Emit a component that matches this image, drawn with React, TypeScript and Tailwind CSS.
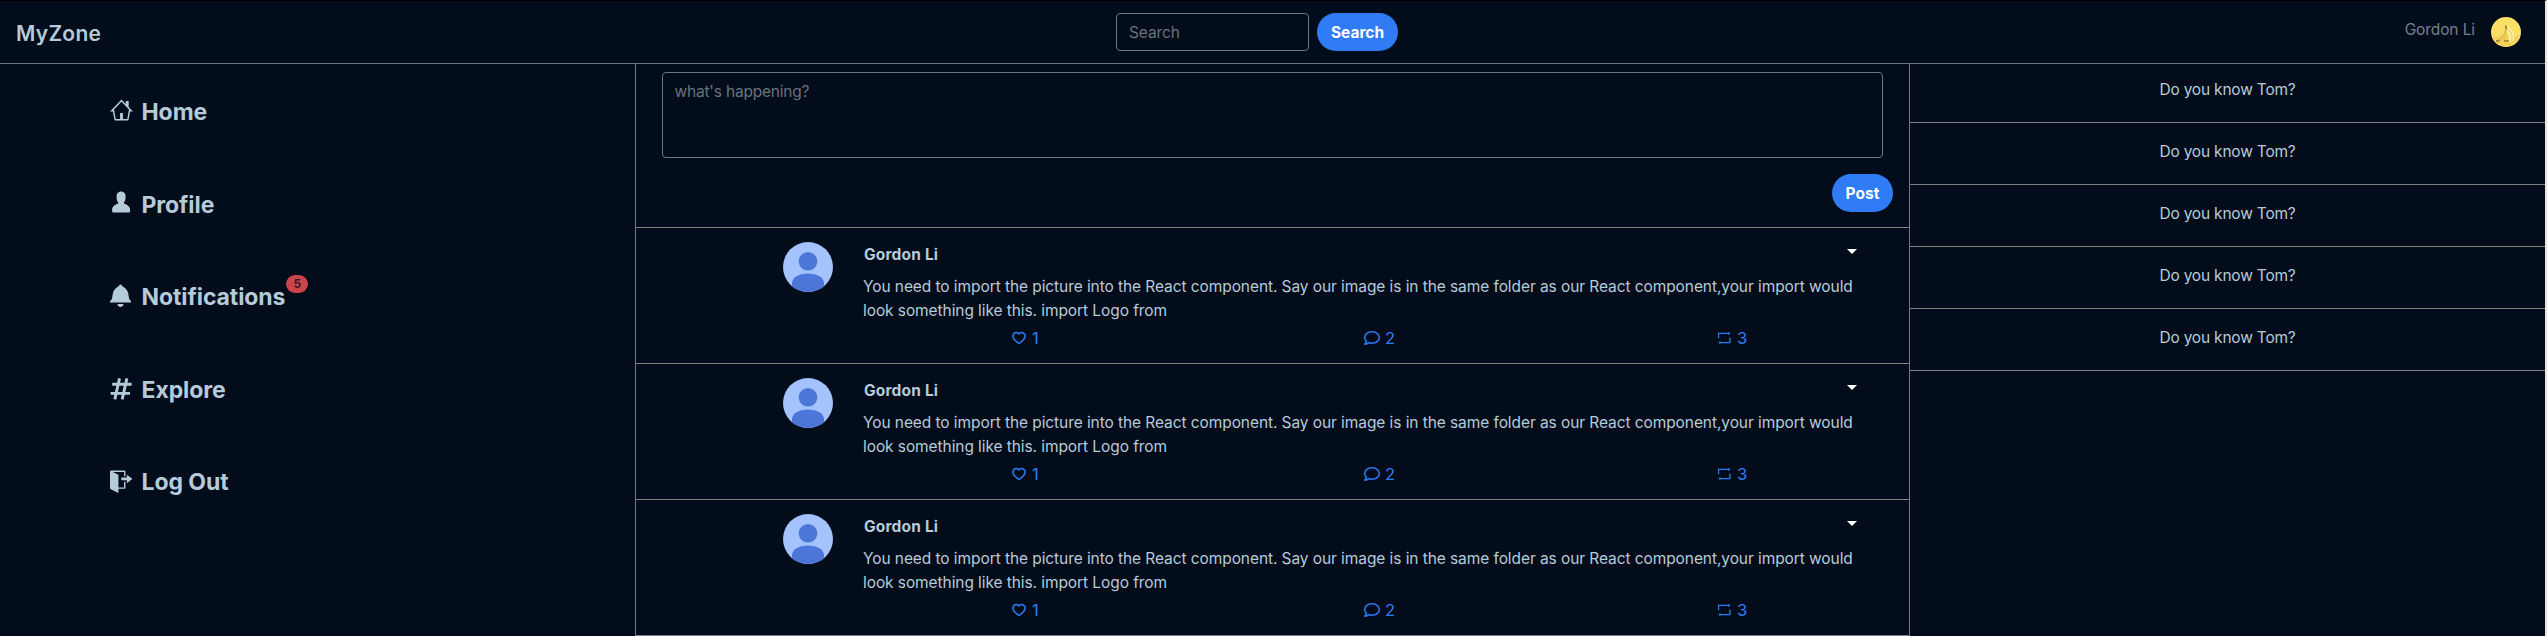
import React from "react";
import { AiOutlineHeart } from "react-icons/ai";
import { FaRegComment } from "react-icons/fa";

function NavIcon({ name }: { name: string }) {
  const common = { fill: "currentColor", className: "block" };
  if (name === "Home")
    return (
      <svg viewBox="0 0 16 16" width="23" height="24" preserveAspectRatio="none" {...common}>
        <path d="M16 9l-3-3V2h-2v2L8 1 0 9h2l1 5c0 .55.45 1 1 1h8c.55 0 1-.45 1-1l1-5h2zm-4 5H9v-4H7v4H4L2.81 7.69 8 2.5l5.19 5.19L12 14z" />
      </svg>
    );
  if (name === "Profile")
    return (
      <svg viewBox="-1.4 0.7 15 16" width="22.5" height="24" {...common}>
        <path d="M12 14.002a.998.998 0 0 1-.998.998H1.001A1 1 0 0 1 0 13.999V13c0-2.633 4-4 4-4s.229-.409 0-1c-.841-.62-.944-1.59-1-4 .173-2.413 1.867-3 3-3s2.827.586 3 3c-.056 2.41-.159 3.38-1 4-.229.59 0 1 0 1s4 1.367 4 4v1.002z" />
      </svg>
    );
  if (name === "Notifications")
    return (
      <svg viewBox="0 0 14 16" width="21" height="24" {...common}>
        <path d="M14 12v1H0v-1l.73-.58c.77-.77.81-2.55 1.19-4.42C2.69 3.23 6 2 6 2c0-.55.45-1 1-1s1 .45 1 1c0 0 3.39 1.23 4.16 5 .38 1.88.42 3.66 1.19 4.42l.66.58H14zm-7 4c1.11 0 2-.89 2-2H5c0 1.11.89 2 2 2z" />
      </svg>
    );
  if (name === "Explore")
    return (
      <svg viewBox="0 -2 23 24" width="23" height="24" className="block" stroke="currentColor" strokeWidth="2.9" fill="none" strokeLinecap="butt">
        <path d="M2.2 6.3H21.6M.6 15.4H20M9.5.4L4.8 21.4M16.9.4L12.200 21.4" />
      </svg>
    );
  return (
    <svg viewBox="0 -1.8 16 18" width="22.5" height="25.3" {...common}>
      <path d="M12 9V7H8V5h4V3l4 3-4 3zm-2 3H6V3L2 1h8v3h1V1c0-.55-.45-1-1-1H1C.45 0 0 .45 0 1v11.38c0 .39.22.73.55.91L6 16.01V13h4c.55 0 1-.45 1-1V8h-1v4z" />
    </svg>
  );
}

function Repeat() {
  return (
    <svg viewBox="0 0 13 12" width="13" height="12" fill="none" stroke="currentColor" strokeWidth="1.2">
      <path d="M.6 6.2V1.4H11M12 5.4V10.6H1.6" />
      <path d="M10.2 0L12.4 1.4L10.2 2.9zM2.4 9.1L.2 10.6L2.4 12z" fill="currentColor" stroke="none" />
    </svg>
  );
}

function UserAvatar() {
  return (
    <svg viewBox="0 0 50 50" width="50" height="50" className="mt-[14px] shrink-0 rounded-full bg-[#a4c2fb]">
      <circle cx="25" cy="19.3" r="9.3" fill="#4c77d8" />
      <path d="M9 50V41C9 35.500 16 31.500 25 31.500S41 35.500 41 41V50z" fill="#4c77d8" />
    </svg>
  );
}

function Post() {
  return (
    <article className="flex h-[136px] border-b border-[#808285] pl-[147px]">
      <UserAvatar />
      <div className="ml-[30px] w-[1062px]">
        <div className="mt-[15px] flex h-6 items-center pl-px">
          <span className="text-[15.5px] font-bold tracking-[0.18px]">Gordon Li</span>
          <svg viewBox="0 0 10 5" width="10" height="5" className="mr-[65px] mb-2 ml-auto fill-white">
            <path d="M0 0H10L5 5z" />
          </svg>
        </div>
        <p className="mt-2 w-[1010px] text-[15.5px] leading-6 tracking-[-0.08px]">
          You need to import the picture into the React component. Say our image is in the same folder as our React component,your import would look something like this. import Logo from
        </p>
        <div className="mt-[3px] flex h-6 text-[16.5px] text-[#2f7cf6]">
          <span className="flex w-[353px] items-center pl-[148px]">
            <AiOutlineHeart className="mr-[5px] size-4" strokeWidth={25} />1
          </span>
          <span className="flex w-[353px] items-center pl-[148px]">
            <FaRegComment className="mr-[5px] size-4" />2
          </span>
          <span className="flex w-[353px] items-center pl-[149px]">
            <span className="mr-[6px]"><Repeat /></span>3
          </span>
        </div>
      </div>
    </article>
  );
}

export default function App() {
  return (
    <div className="h-[636px] w-[2547px] overflow-hidden border-t border-r-2 border-t-black border-r-[#e4e5e7] bg-[#020c1b] font-[Inter,sans-serif] text-[#b6cbd9]">
      <header className="flex h-[63px] items-start border-b border-[#6f777c]">
        <h1 className="mt-[18px] w-[1116px] pl-4 text-[21px] leading-[30px] font-semibold tracking-[0.25px]">MyZone</h1>
        <div className="mt-3 flex h-[38px] gap-2">
          <input
            placeholder="Search"
            className="w-[193px] rounded border border-[#6f777c] bg-transparent px-3 pt-px text-[15.5px] tracking-[-0.1px] placeholder:text-[#6a737b]"
          />
          <button className="w-[81px] rounded-[19px] bg-[#2f7cf6] pt-px text-[15.5px] font-bold text-white">Search</button>
        </div>
        <span className="mt-[17px] ml-auto text-[15.5px] leading-6 tracking-[-0.1px] text-[#76808a]">Gordon Li</span>
        <svg viewBox="0 0 30 30" width="30" height="30" className="mt-4 mr-6 ml-4 rounded-full">
          <rect width="30" height="30" fill="#fbe068" />
          <path d="M0 20Q15 17 30 20V30H0z" fill="#f5d35b" />
          <path d="M14.500 9.500L16 9C21 12 24.500 17 22.500 24L17 25C19 19 17 15 14.500 9.500z" fill="#fff0a3" />
          <path d="M14.500 9.500C14 17 10 21 5 23.500L14 24C17 19 16.500 15 14.500 9.500z" fill="#f0cb52" />
          <path d="M15.500 11C20 14 22 19 20.500 24M14.500 11C14.500 17 11 21 6 23.500" stroke="#c9a746" strokeWidth=".6" fill="none" />
          <path d="M14.500 8.500L15.500 12M5 23.800L9 24M13 24L18 23.800" stroke="#80612c" strokeWidth="1.2" />
        </svg>
      </header>
      <main className="flex h-[573px]">
        <nav className="w-[635px] shrink-0 pt-[29px] pl-[109.500px]">
          {["Home", "Profile", "Notifications", "Explore", "Log Out"].map((label) => (
            <div key={label} className="flex h-[92.600px] items-start">
              <span className="mt-[5px] w-8 shrink-0">
                <NavIcon name={label} />
              </span>
              <span className="relative text-[23px] leading-[38px] font-bold tracking-[-0.08px]">
                {label}
                {label === "Notifications" && (
                  <span className="absolute -top-[3px] left-full ml-[1px] h-[18px] w-[22px] rounded-[9px] bg-[#cc444b] text-center text-[12px] leading-[18px] font-bold text-[#3a1d29]">
                    5
                  </span>
                )}
              </span>
            </div>
          ))}
        </nav>
        <section className="w-[1275px] shrink-0 border-x border-[#75797d]">
          <div className="flex h-[164px] flex-col border-b border-[#808285] pt-2 pl-[26px]">
            <textarea
              placeholder="what's happening?"
              className="h-[86px] w-[1221px] shrink-0 resize-none rounded border border-[#6f777c] bg-transparent px-[11.500px] py-[7px] text-[15.5px] leading-6 tracking-[-0.2px] placeholder:text-[#6a737b]"
            />
            <button className="mt-4 mr-4 h-[38px] w-[61px] self-end rounded-[19px] bg-[#2f7cf6] pt-px text-[15.5px] font-bold text-white">
              Post
            </button>
          </div>
          <Post />
          <Post />
          <Post />
        </section>
        <aside className="flex-1">
          {[0, 1, 2, 3, 4].map((i) => (
            <div
              key={i}
              className={
                i === 0
                  ? "h-[59px] border-b border-[#808080] pt-[14px] text-center text-[15.5px] leading-6 tracking-[-0.2px]"
                  : "h-[62px] border-b border-[#808080] pt-[17px] text-center text-[15.5px] leading-6 tracking-[-0.2px]"
              }
            >
              Do you know Tom?
            </div>
          ))}
        </aside>
      </main>
    </div>
  );
}
